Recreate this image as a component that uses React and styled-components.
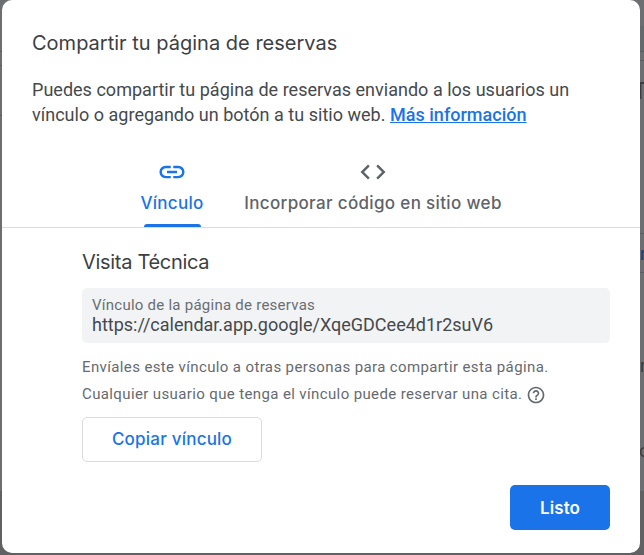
import React from "react";
import styled, { createGlobalStyle } from "styled-components";

const Global = createGlobalStyle`
  *, *::before, *::after { box-sizing: border-box; }
  body { margin: 0; overflow: hidden; background: #6d6e71; font-family: Roboto, "Liberation Sans", sans-serif; }
  h1, h2, p { margin: 0; font-weight: 400; }
  button, a { font: inherit; }
`;

const display = `"Google Sans", Inter, sans-serif`;

const Screen = styled.div`
  display: grid;
  grid-template-columns: 2px 638px 4px;
  width: 644px;
  height: 555px;
  background: linear-gradient(#6d6e71 0 491px, #616163 491px);
`;

const Edge = styled.div`
  display: flex;
  flex-direction: column;
  overflow: hidden;
`;

const Cell = styled.div`
  flex: none;
  height: ${(p) => p.$h}px;
  background: ${(p) => p.$bg || "transparent"};
  border-bottom: ${(p) => (p.$line ? "1px solid #5b5c62" : "0")};
  color: ${(p) => p.$color || "#3b3c40"};
  font-size: ${(p) => p.$size || 18}px;
  font-weight: ${(p) => p.$weight || 400};
  line-height: ${(p) => p.$h}px;
  text-indent: ${(p) => p.$indent || 0}px;
  white-space: nowrap;
`;

const Dialog = styled.section`
  display: flex;
  flex-direction: column;
  height: 553px;
  background: #fff;
  border-radius: 10px;
`;

const Header = styled.header`
  padding: 30px 30px 0;
  color: #3c4043;
`;

const Title = styled.h1`
  font: 400 20px/26px ${display};
  letter-spacing: ${(p) => p.$spacing}px;
  color: #3c4043;
  white-space: nowrap;
`;

const Intro = styled.p`
  margin-top: 21px;
  font-size: 18px;
  line-height: 25px;
  letter-spacing: 0.02px;
  color: #45494c;
  white-space: nowrap;
`;

const Link = styled.a`
  color: #1a73e8;
  font-weight: 500;
  text-decoration: underline;
`;

const Tabs = styled.nav`
  display: flex;
  gap: 41px;
  height: 101px;
  padding: 30px 0 0 139px;
  border-bottom: 1px solid #dadce0;
`;

const Tab = styled.div`
  display: flex;
  flex-direction: column;
  align-items: center;
  width: ${(p) => p.$w}px;
  height: 70px;
  color: ${(p) => (p.$active ? "#1a73e8" : "#5f6368")};
  font: 500 17px/24px ${display};
  letter-spacing: ${(p) => p.$spacing}px;
  white-space: nowrap;

  svg { flex: none; margin-bottom: 4px; }
`;

const Indicator = styled.span`
  width: 57px;
  height: 3px;
  margin-top: auto;
  border-radius: 3px 3px 0 0;
  background: #1a73e8;
`;

const Content = styled.div`
  padding: 21px 30px 0 80px;
`;

const LinkField = styled.div`
  height: 55px;
  margin-top: 13px;
  padding: 7px 10px;
  border-radius: 5px;
  background: #f1f3f4;
`;

const FieldLabel = styled.div`
  font-size: 15px;
  line-height: 20px;
  letter-spacing: 0.25px;
  color: #6a6e73;
`;

const Url = styled.div`
  font-size: 18px;
  line-height: 20px;
  color: #45494c;
`;

const Note = styled.p`
  display: flex;
  align-items: center;
  gap: 4px;
  height: 27px;
  font-size: 15px;
  letter-spacing: 0.375px;
  color: #666a6f;
  white-space: nowrap;

  svg { margin-top: 2px; }
`;

const Notes = styled.div`
  padding-top: 10px;
`;

const Button = styled.button`
  display: block;
  padding: 0;
  border-radius: 5px;
  height: 45px;
  font: 500 17px/24px ${display};
  letter-spacing: ${(p) => p.$spacing}px;
  white-space: nowrap;
`;

const OutlineButton = styled(Button)`
  width: 180px;
  margin-top: 10px;
  padding-bottom: 2px;
  border: 1px solid #dadce0;
  background: #fff;
  color: #1a73e8;
`;

const PrimaryButton = styled(Button)`
  width: 100px;
  border: 0;
  background: #1a73e8;
  color: #fff;
  font-weight: 600;
`;

const Footer = styled.footer`
  display: flex;
  justify-content: flex-end;
  margin-top: auto;
  padding: 0 30px 23px;
`;

const Glyph = ({ size, children }) => (
  <svg width={size} height={size} viewBox="0 0 24 24" fill="currentColor" aria-hidden="true">
    {children}
  </svg>
);

export default function App() {
  return (
    <>
      <Global />
      <Screen>
        <Edge>
          <Cell $h={52} $line />
          <Cell $h={14} $line />
          <Cell $h={50} $line />
        </Edge>
        <Dialog role="dialog" aria-labelledby="share-title">
          <Header>
            <Title id="share-title" $spacing={0.01}>Compartir tu página de reservas</Title>
            <Intro>
              Puedes compartir tu página de reservas enviando a los usuarios un
              <br />
              vínculo o agregando un botón a tu sitio web. <Link>Más información</Link>
            </Intro>
          </Header>
          <Tabs>
            <Tab $active $w={62} $spacing={0.3}>
              <Glyph size={30}>
                <path d="M3.9 12c0-1.71 1.39-3.1 3.1-3.1h4V7H7c-2.76 0-5 2.24-5 5s2.24 5 5 5h4v-1.9H7c-1.71 0-3.1-1.39-3.1-3.1zM8 13h8v-2H8v2zm9-6h-4v1.9h4c1.71 0 3.1 1.39 3.1 3.1s-1.39 3.1-3.1 3.1h-4V17h4c2.76 0 5-2.24 5-5s-2.24-5-5-5z" />
              </Glyph>
              Vínculo
              <Indicator />
            </Tab>
            <Tab $w={258} $spacing={0.34}>
              <Glyph size={30}>
                <path d="M9.4 16.6L4.8 12l4.6-4.6L8 6l-6 6 6 6 1.4-1.4zm5.2 0l4.6-4.6-4.6-4.6L16 6l6 6-6 6-1.4-1.4z" />
              </Glyph>
              Incorporar código en sitio web
            </Tab>
          </Tabs>
          <Content>
            <Title as="h2" $spacing={-0.3}>Visita Técnica</Title>
            <LinkField>
              <FieldLabel>Vínculo de la página de reservas</FieldLabel>
              <Url>https://calendar.app.google/XqeGDCee4d1r2suV6</Url>
            </LinkField>
            <Notes>
              <Note>Envíales este vínculo a otras personas para compartir esta página.</Note>
              <Note>
                Cualquier usuario que tenga el vínculo puede reservar una cita.
                <Glyph size={20}>
                  <path d="M11 18h2v-2h-2v2zm1-16C6.48 2 2 6.48 2 12s4.48 10 10 10 10-4.48 10-10S17.52 2 12 2zm0 18c-4.41 0-8-3.59-8-8s3.59-8 8-8 8 3.59 8 8-3.59 8-8 8zm0-14c-2.21 0-4 1.79-4 4h2c0-1.1.9-2 2-2s2 .9 2 2c0 2-3 1.75-3 5h2c0-2.25 3-2.5 3-5 0-2.21-1.79-4-4-4z" />
                </Glyph>
              </Note>
            </Notes>
            <OutlineButton $spacing={0.22}>Copiar vínculo</OutlineButton>
          </Content>
          <Footer>
            <PrimaryButton $spacing={0.1}>Listo</PrimaryButton>
          </Footer>
        </Dialog>
        <Edge>
          <Cell $h={26} />
          <Cell $h={26} $bg="#64696c" $line />
          <Cell $h={9} $line />
          <Cell $h={17} />
          <Cell $h={26} $size={24} $indent={-7}>T</Cell>
          <Cell $h={130} $line />
          <Cell $h={39} $line $color="#1f4478" $weight={500}>r</Cell>
          <Cell $h={80} />
          <Cell $h={26}>r</Cell>
          <Cell $h={59} />
          <Cell $h={26} $indent={-1}>o</Cell>
        </Edge>
      </Screen>
    </>
  );
}
